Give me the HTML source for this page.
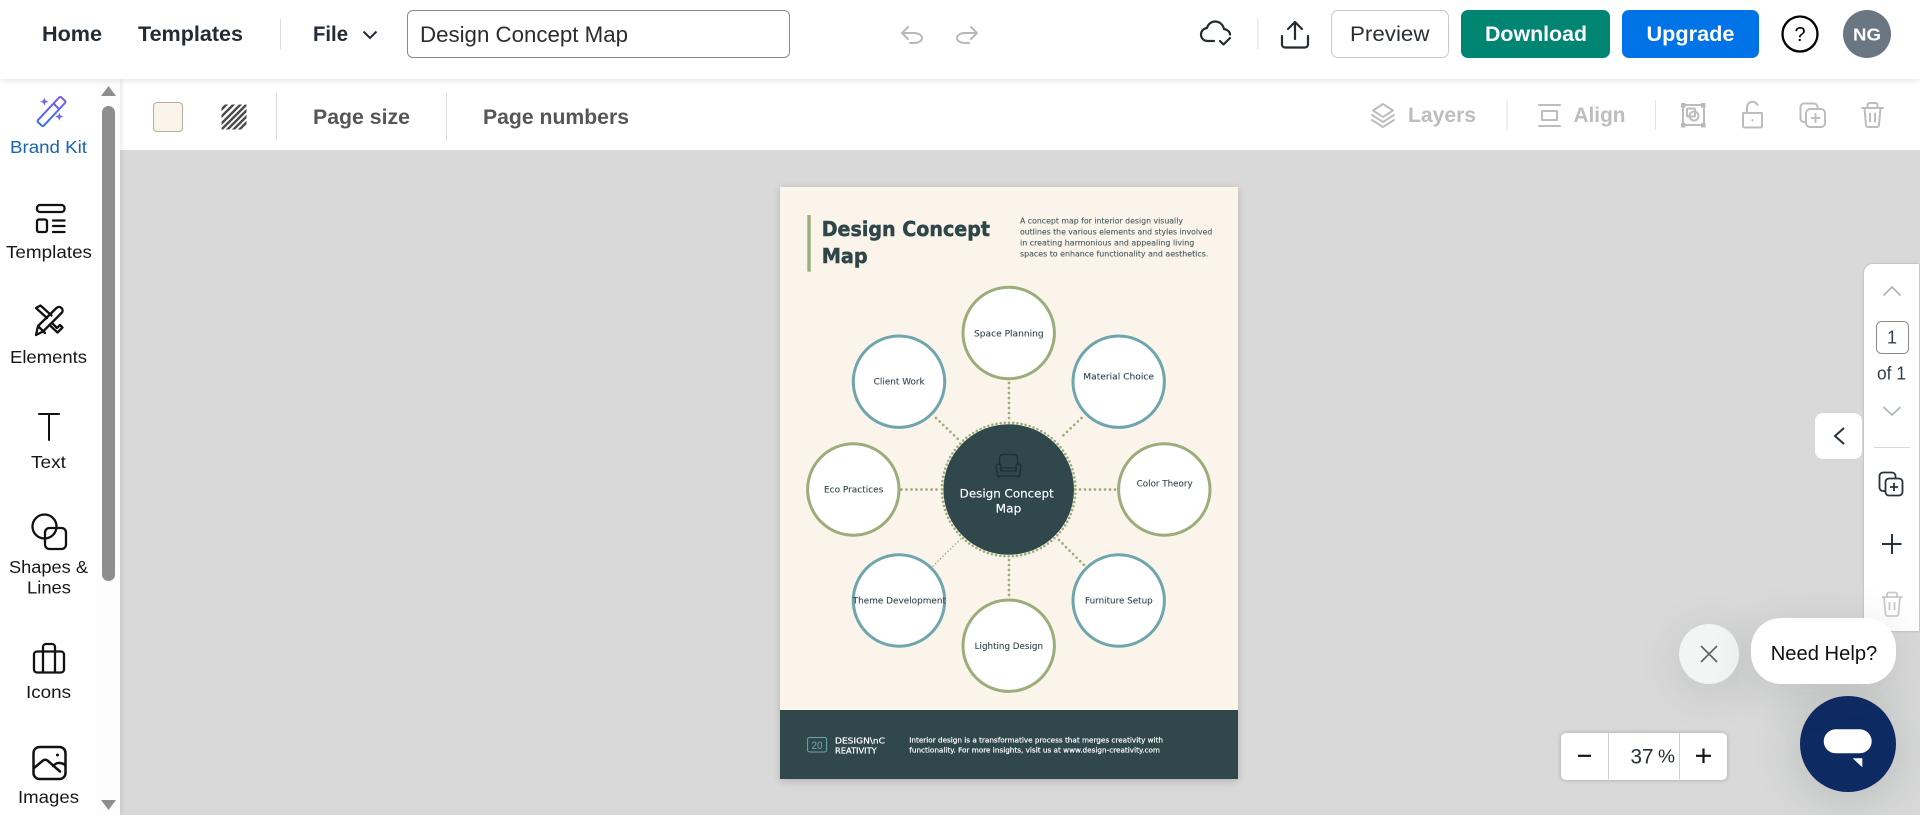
<!DOCTYPE html>
<html lang="en">
<head>
<meta charset="utf-8">
<title>Design Concept Map</title>
<style>
html,body{margin:0;padding:0;width:1920px;height:815px;overflow:hidden;background:#d9d9d9;font-family:"Liberation Sans",sans-serif}
.b{position:absolute;box-sizing:border-box}
svg{position:absolute;left:0;top:0}
text{font-family:"Liberation Sans",sans-serif}
.p text{font-family:"DejaVu Sans","Liberation Sans",sans-serif}
</style>
</head>
<body>
<div class="b" style="left:120px;top:79px;width:1800px;height:71px;background:#fff"></div>
<div class="b" style="left:0;top:79px;width:97px;height:736px;background:#fff"></div>
<div class="b" style="left:97px;top:79px;width:23px;height:736px;background:#fdfdfd;box-shadow:2px 0 4px rgba(0,0,0,.08)"></div>
<div class="b" style="left:0;top:0;width:1920px;height:79px;background:#fff;box-shadow:0 1px 7px rgba(0,0,0,.12)"></div>
<div class="b" style="left:780px;top:187px;width:458px;height:592px;background:#fbf4ea;box-shadow:0 2px 8px rgba(0,0,0,.18)"></div>
<div class="b" style="left:780px;top:709.5px;width:458px;height:69.5px;background:#30474b"></div>
<div class="b" style="left:407px;top:10px;width:383px;height:48px;border:1px solid #8a8a8a;border-radius:6px;background:#fff"></div>
<div class="b" style="left:1331px;top:10px;width:118px;height:48px;border:1px solid #c9c9c9;border-radius:7px;background:#fff"></div>
<div class="b" style="left:1461px;top:10px;width:149px;height:48px;border-radius:7px;background:#008573"></div>
<div class="b" style="left:1622px;top:10px;width:136.5px;height:48px;border-radius:7px;background:#0073e6"></div>
<div class="b" style="left:153px;top:102px;width:30px;height:30px;border:1px solid #b5aca0;border-radius:4px;background:#fbf4ea"></div>
<div class="b" style="left:1864px;top:263.5px;width:55px;height:367px;background:#fff;border-radius:9px 0 0 0;box-shadow:0 0 2px rgba(0,0,0,.25)"></div>
<div class="b" style="left:1815px;top:413px;width:47px;height:46px;background:#fff;border-radius:8px"></div>
<div class="b" style="left:1561px;top:733px;width:166px;height:46.5px;background:#fff;border-radius:5px;box-shadow:0 0 4px rgba(0,0,0,.25)"></div>
<div class="b" style="left:1679px;top:624px;width:60px;height:60px;border-radius:50%;background:#f3f4f4;box-shadow:0 8px 45px rgba(40,60,60,.14)"></div>
<div class="b" style="left:1800px;top:696px;width:96px;height:96px;border-radius:50%;background:#0e2a63;box-shadow:0 6px 50px rgba(40,60,60,.2)"></div>
<div class="b" style="left:1751px;top:618px;width:145px;height:66px;border-radius:30px;background:#fff;box-shadow:0 8px 45px rgba(40,60,60,.14)"></div>

<svg width="1920" height="815" viewBox="0 0 1920 815" xmlns="http://www.w3.org/2000/svg">
<defs>
<linearGradient id="g" x1="0" y1="1" x2="1" y2="0"><stop offset="0" stop-color="#1f7ae8"/><stop offset="1" stop-color="#8a55f5"/></linearGradient>
<linearGradient id="g2" gradientUnits="userSpaceOnUse" x1="36" y1="126" x2="63" y2="98"><stop offset="0" stop-color="#1f7ae8"/><stop offset="1" stop-color="#8a55f5"/></linearGradient>
<clipPath id="hc"><rect x="221.5" y="104.5" width="25" height="25"/></clipPath>
</defs>

<!-- top bar -->
<g font-size="21" font-weight="700" fill="#232b35">
<text x="42" y="41" textLength="60" lengthAdjust="spacingAndGlyphs">Home</text>
<text x="138" y="41" textLength="105" lengthAdjust="spacingAndGlyphs">Templates</text>
<text x="313" y="41" textLength="35" lengthAdjust="spacingAndGlyphs">File</text>
</g>
<path d="M280.5 19V49M1258 19V49" stroke="#dcdcdc" fill="none"/>
<path d="M363.5 31.5l6.500 6.500 6.500-6.500" stroke="#232b35" stroke-width="2" fill="none"/>
<text x="420" y="42" font-size="22" fill="#2c2c2c" textLength="208" lengthAdjust="spacingAndGlyphs">Design Concept Map</text>
<!-- undo/redo -->
<g stroke="#b8b8b8" stroke-width="2" fill="none" stroke-linecap="round" stroke-linejoin="round">
<path d="M908 27l-6 6 6 6M902 33h12a8 5 0 0 1 0 10h-4"/>
<path d="M971 27l6 6-6 6M977 33h-12a8 5 0 0 0 0 10h4"/>
</g>
<!-- cloud -->
<g stroke="#252b33" stroke-width="2.200" fill="none" stroke-linecap="round" stroke-linejoin="round">
<path d="M1214 41h-6c-4.500 0-7-3-7-6.500s2.500-6 6-6.500c1-4 4.500-6.500 8-6.500 4.500 0 8 3 9 7.500 3 .5 6 2.500 6 5.500"/>
<path d="M1220 41l3.500 3.500 6.500-6.500"/>
<path d="M1295 22v17M1288 29l7-7 7 7M1282 36v8.500a3 3 0 0 0 3 3h20a3 3 0 0 0 3-3V36"/>
</g>
<g text-anchor="start">
<text x="1350" y="41" font-size="21" fill="#2a2f36" textLength="79.500" lengthAdjust="spacingAndGlyphs">Preview</text>
<text x="1485" y="41" font-size="21" font-weight="700" fill="#fff" textLength="102" lengthAdjust="spacingAndGlyphs">Download</text>
<text x="1646.500" y="41" font-size="21" font-weight="700" fill="#fff" textLength="88" lengthAdjust="spacingAndGlyphs">Upgrade</text>
</g>
<circle cx="1800" cy="34" r="17.500" fill="#fff" stroke="#000" stroke-width="2.300"/>
<text x="1800" y="41" font-size="20" text-anchor="middle" fill="#000">?</text>
<circle cx="1867" cy="34" r="24" fill="#6b7683"/>
<text x="1853" y="40.500" font-size="17.500" font-weight="700" fill="#fff" textLength="28" lengthAdjust="spacingAndGlyphs">NG</text>

<!-- toolbar -->
<g clip-path="url(#hc)" stroke="#4a4a4a" stroke-width="2.400">
<path d="M215 116l16-16M215 123l22-22M215 130l28-28M220 131l28-28M226 131l24-24M232 131l20-20M238 131l14-14"/>
</g>
<path d="M276.500 93V141M446.500 93V141" stroke="#dedede" fill="none"/>
<g font-size="21" font-weight="700" fill="#565656">
<text x="313" y="124" textLength="97" lengthAdjust="spacingAndGlyphs">Page size</text>
<text x="483" y="124" textLength="146" lengthAdjust="spacingAndGlyphs">Page numbers</text>
</g>
<path d="M1507 100V130M1655.500 100V130" stroke="#e2e2e2" fill="none"/>
<g font-size="21" font-weight="700" fill="#bdbdbd">
<text x="1408" y="122" textLength="68" lengthAdjust="spacingAndGlyphs">Layers</text>
<text x="1573.500" y="122" textLength="52" lengthAdjust="spacingAndGlyphs">Align</text>
</g>
<g stroke="#bdbdbd" stroke-width="2" fill="none" stroke-linejoin="round" stroke-linecap="round">
<path d="M1383 104l10 6.500-10 6.500-10-6.500zM1372 115l11 7 11-7M1372 120l11 7 11-7"/>
<path d="M1539 105h21M1539 126h21M1542 111h15v9h-15z" stroke-width="2"/>
<rect x="1683" y="105" width="21" height="20"/>
<rect x="1687" y="108.500" width="8" height="8" rx="1"/>
<circle cx="1694" cy="116" r="4.500"/>
<path d="M1743 113h19v13a1.500 1.500 0 0 1-1.500 1.500h-16a1.500 1.500 0 0 1-1.500-1.500zM1747 113v-6a5.500 5.500 0 0 1 10.500-2"/>
<path d="M1752.500 120v.5"/>
<rect x="1806" y="109" width="19" height="18" rx="4"/>
<path d="M1806 122h-2a3.500 3.500 0 0 1-3.500-3.500V107a3.500 3.500 0 0 1 3.500-3.500h10a3.500 3.500 0 0 1 3.500 3.500v2M1815.500 114v8M1811.500 118h8"/>
<path d="M1862 108h21M1867.500 108v-3a2 2 0 0 1 2-2h6a2 2 0 0 1 2 2v3M1864.500 108l1.500 17a2 2 0 0 0 2 2h9a2 2 0 0 0 2-2l1.500-17M1870 113.500v8M1875 113.500v8"/>
</g>
<g fill="#b9b9b9">
<rect x="1681" y="103" width="4.500" height="4.500"/><rect x="1701" y="103" width="4.500" height="4.500"/><rect x="1681" y="123" width="4.500" height="4.500"/><rect x="1701" y="123" width="4.500" height="4.500"/>
</g>

<!-- left panel -->
<path d="M108.500 86l7.500 10h-15z" fill="#8e8e8e"/>
<rect x="102" y="106" width="13" height="475" rx="6.500" fill="#8e8e8e"/>
<path d="M108.500 810l-7.500-10h15z" fill="#8e8e8e"/>
<g stroke="url(#g2)" fill="none" stroke-width="2" stroke-linejoin="round">
<rect x="34.500" y="107.500" width="34" height="8" rx="1.500" transform="rotate(-47 51.500 111.500)" />
<path d="M53.500 103.500l6 6"/>
</g>
<path d="M44.300 97.500l1.100 3 3 1.100-3 1.100-1.100 3-1.100-3-3-1.100 3-1.100zM59.300 112.500l1.100 3 3 1.100-3 1.100-1.100 3-1.100-3-3-1.100 3-1.100z" fill="#6f62f2"/>
<g font-size="17.500" fill="#171717">
<text x="10" y="153" fill="#1565b0" textLength="77" lengthAdjust="spacingAndGlyphs">Brand Kit</text>
<text x="6" y="258" textLength="86" lengthAdjust="spacingAndGlyphs">Templates</text>
<text x="10" y="363" textLength="77" lengthAdjust="spacingAndGlyphs">Elements</text>
<text x="31" y="468" textLength="35" lengthAdjust="spacingAndGlyphs">Text</text>
<text x="9" y="573" textLength="79" lengthAdjust="spacingAndGlyphs">Shapes &amp;</text>
<text x="27" y="593.500" textLength="44" lengthAdjust="spacingAndGlyphs">Lines</text>
<text x="26" y="698" textLength="45" lengthAdjust="spacingAndGlyphs">Icons</text>
<text x="18" y="803" textLength="61" lengthAdjust="spacingAndGlyphs">Images</text>
</g>
<g stroke="#111" stroke-width="2.300" fill="none" stroke-linejoin="round" stroke-linecap="round">
<rect x="37" y="205" width="27.500" height="7" rx="3"/>
<rect x="37" y="219.500" width="10" height="12.500" rx="2"/>
<path d="M53 220.500h11.500M53 226h11.500M53 232h11.500"/>
<!-- elements -->
<path d="M36 335l2-9 18.500-18c1.500-1.500 3.500-1.500 5 0s1.500 3.500 0 5L43 331.500zM38 326l7 7"/>
<path d="M47 318l-11-10 4.500-2.500 11 10M53 324l4 4 3-3 2.500 2.500-5 5-8-7.500"/>
<path d="M39 414h20M49 414v26" stroke-width="2"/>
<circle cx="44.500" cy="526.500" r="12"/>
<rect x="45" y="528" width="21" height="21" rx="4.500"/>
<rect x="34" y="651.500" width="30" height="21" rx="3"/>
<path d="M43 672.500V647a3 3 0 0 1 3-3h6a3 3 0 0 1 3 3v25.500"/>
<rect x="33.500" y="747" width="32" height="32" rx="6" stroke-width="2.500"/>
<path d="M34 768l9-7.500c1.500-1 3-1 4.500 0L60 771.500M53 766c2-2 4.500-3.500 7-3 3 .5 5 1 5.500 3" stroke-width="2.500"/>
</g>
<circle cx="57.500" cy="755" r="1.500" fill="#111"/>

<!-- canvas doc -->
<rect x="807.300" y="215" width="3.400" height="56.700" fill="#9bad7a"/>
<g class="p">
<g font-size="20.500" font-weight="700" fill="#2f4649" stroke="#2f4649" stroke-width=".5">
<text x="821.700" y="236" textLength="168.300" lengthAdjust="spacingAndGlyphs">Design Concept</text>
<text x="821.700" y="263" textLength="46" lengthAdjust="spacingAndGlyphs">Map</text>
</g>
<g font-size="8" fill="#4a5c60" stroke="#4a5c60" stroke-width=".12">
<text x="1020" y="223.300" textLength="163" lengthAdjust="spacingAndGlyphs">A concept map for interior design visually</text>
<text x="1020" y="234.300" textLength="192.300" lengthAdjust="spacingAndGlyphs">outlines the various elements and styles involved</text>
<text x="1020" y="245.300" textLength="174.300" lengthAdjust="spacingAndGlyphs">in creating harmonious and appealing living</text>
<text x="1020" y="256.300" textLength="188.300" lengthAdjust="spacingAndGlyphs">spaces to enhance functionality and aesthetics.</text>
</g>
</g>
<g stroke="#9bad7a" stroke-width="2.700" stroke-dasharray="0 5" stroke-linecap="round" fill="none">
<path d="M1009 383V421M1009 560V597M901.500 489.500H941M1075 489.500H1117"/>
<path d="M936 418L958 439M1081.500 418L1060.500 438M1059 540L1085 566"/>
<path d="M933 566L961.700 538" stroke-width="1.600" stroke-dasharray="0 3.500"/>
<circle cx="1008.700" cy="489.500" r="66.800" stroke-width="2.600" stroke-dasharray="0 4.200"/>
</g>
<circle cx="1008.700" cy="489.500" r="65.300" fill="#30474b"/>
<g fill="#fff" stroke-width="3">
<circle cx="1008.700" cy="333" r="45.700" stroke="#9bad7a"/>
<circle cx="899" cy="381.700" r="45.700" stroke="#6fa6ae"/>
<circle cx="1118.700" cy="381.700" r="45.700" stroke="#6fa6ae"/>
<circle cx="853.300" cy="489.500" r="45.700" stroke="#9bad7a"/>
<circle cx="1164.300" cy="489.500" r="45.700" stroke="#9bad7a"/>
<circle cx="899" cy="600.500" r="45.700" stroke="#6fa6ae"/>
<circle cx="1118.700" cy="600.500" r="45.700" stroke="#6fa6ae"/>
<circle cx="1008.700" cy="645.700" r="45.700" stroke="#9bad7a"/>
</g>
<g class="p">
<g font-size="8.500" fill="#33454c" stroke="#33454c" stroke-width=".1">
<text x="974" y="336.500" textLength="69.700" lengthAdjust="spacingAndGlyphs">Space Planning</text>
<text x="873.700" y="384.500" textLength="51" lengthAdjust="spacingAndGlyphs">Client Work</text>
<text x="1083.300" y="379.500" textLength="70.700" lengthAdjust="spacingAndGlyphs">Material Choice</text>
<text x="824" y="492.700" textLength="59.300" lengthAdjust="spacingAndGlyphs">Eco Practices</text>
<text x="1136.700" y="486.700" textLength="56" lengthAdjust="spacingAndGlyphs">Color Theory</text>
<text x="852.700" y="603.700" textLength="93.300" lengthAdjust="spacingAndGlyphs">Theme Development</text>
<text x="1085" y="603.700" textLength="67.700" lengthAdjust="spacingAndGlyphs">Furniture Setup</text>
<text x="974.700" y="649" textLength="68.300" lengthAdjust="spacingAndGlyphs">Lighting Design</text>
</g>
<g font-size="11.500" fill="#fff" stroke="#fff" stroke-width=".15">
<text x="959.700" y="497.700" textLength="94" lengthAdjust="spacingAndGlyphs">Design Concept</text>
<text x="995.700" y="512.700" textLength="25.600" lengthAdjust="spacingAndGlyphs">Map</text>
</g>
</g>
<!-- sofa -->
<g stroke="#1f2f33" stroke-width="1.300" fill="none" stroke-linejoin="round">
<path d="M999.500 464v-6a3.500 3.500 0 0 1 3.500-3.500h11a3.500 3.500 0 0 1 3.500 3.500v6"/>
<path d="M996 466a3 3 0 0 1 5 -1v6h15v-6a3 3 0 0 1 5 1l-1.500 10h-22z"/>
<path d="M1001 471v-3h15v3M999 476.500v1.500M1018 476.500v1.500"/>
</g>
<!-- footer -->
<rect x="807.600" y="737.500" width="19" height="14.500" rx="2" fill="none" stroke="#6fa6ae" stroke-width="1"/>
<text x="811.500" y="749" font-size="11" fill="#6fa6ae" textLength="11" lengthAdjust="spacingAndGlyphs">20</text>
<g class="p" fill="#fff" stroke="#fff">
<g font-size="7.800" stroke-width=".2">
<text x="835" y="743.500" textLength="50" lengthAdjust="spacingAndGlyphs">DESIGN\nC</text>
<text x="835" y="753.500" textLength="41.700" lengthAdjust="spacingAndGlyphs">REATIVITY</text>
</g>
<g font-size="7.400" stroke-width=".2">
<text x="909.300" y="742.300" textLength="253.700" lengthAdjust="spacingAndGlyphs">Interior design is a transformative process that merges creativity with</text>
<text x="909.300" y="752.300" textLength="250.700" lengthAdjust="spacingAndGlyphs">functionality. For more insights, visit us at www.design-creativity.com</text>
</g>
</g>

<!-- right panel -->
<g stroke="#adb5bd" stroke-width="1.700" fill="none">
<path d="M1883.500 295.500l8.500-8.500 8.500 8.500"/>
<path d="M1883.500 407l8.500 8 8.500-8"/>
</g>
<rect x="1876.500" y="321.500" width="32" height="32" rx="5" fill="#fff" stroke="#8a8a8a"/>
<text x="1892" y="343.500" font-size="18" fill="#33404d" text-anchor="middle">1</text>
<text x="1877" y="379.500" font-size="18" fill="#33404d" textLength="29" lengthAdjust="spacingAndGlyphs">of 1</text>
<path d="M1874 447.500H1910" stroke="#d8d8d8"/>
<path d="M1844 428l-9 8 9 8" stroke="#26323d" stroke-width="2" fill="none"/>
<g stroke="#26323d" stroke-width="1.800" fill="none" stroke-linejoin="round">
<rect x="1885.500" y="478.500" width="17" height="17" rx="3.500"/>
<path d="M1885.500 491H1883a3.500 3.500 0 0 1-3.500-3.500V476a3.500 3.500 0 0 1 3.500-3.500h9a3.500 3.500 0 0 1 3.500 3.500v2.500"/>
<path d="M1894 483v8M1890 487h8"/>
<path d="M1882 544h19.500M1892 534v20" stroke-width="2"/>
</g>
<path d="M1882 597h20.500M1887 597v-2.500a2 2 0 0 1 2-2h6a2 2 0 0 1 2 2v2.500M1884 597l1.500 17a2 2 0 0 0 2 2h9a2 2 0 0 0 2-2l1.500-17M1889.500 602v8M1894.500 602v8" stroke="#c8c8c8" stroke-width="1.800" fill="none"/>

<!-- zoom -->
<path d="M1608.500 733V779.500M1679.500 733V779.500" stroke="#cfcfcf"/>
<path d="M1578 755.800H1591M1696 755.800H1711M1703.500 748.500V763" stroke="#111" stroke-width="2.200" fill="none"/>
<text x="1630.500" y="763.500" font-size="21" fill="#232b35" textLength="23" lengthAdjust="spacingAndGlyphs">37</text>
<text x="1658" y="762.500" font-size="18" fill="#232b35" textLength="17" lengthAdjust="spacingAndGlyphs">%</text>

<!-- chat -->
<path d="M1701 646l16 16M1717 646l-16 16" stroke="#5f6366" stroke-width="1.600" fill="none"/>
<text x="1770.700" y="660" font-size="20.500" fill="#111" textLength="106.600" lengthAdjust="spacingAndGlyphs">Need Help?</text>
<rect x="1823.700" y="729.300" width="48" height="24" rx="12" fill="#fff"/>
<path d="M1852.700 758.300h9.600v9z" fill="#fff"/>
</svg>
</body>
</html>
